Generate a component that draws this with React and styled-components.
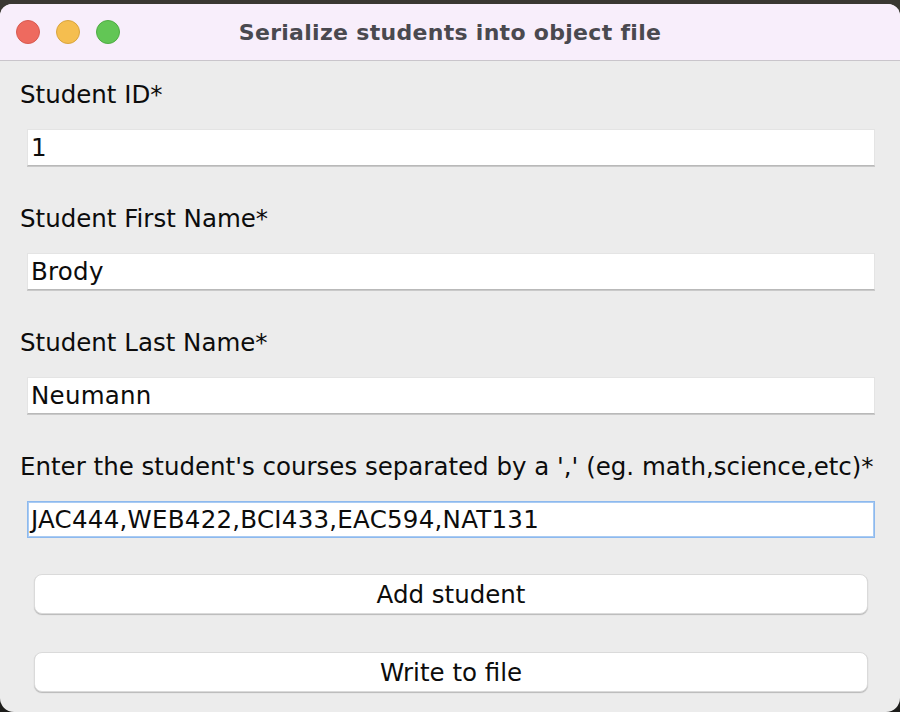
import React from 'react';
import styled, { createGlobalStyle } from 'styled-components';

const GlobalStyle = createGlobalStyle`
html, body {
  margin: 0;
  padding: 0;
  background: #1c1c1a;
}
body {
  width: 900px;
  height: 712px;
  overflow: hidden;
  font-family: 'DejaVu Sans', 'Liberation Sans', sans-serif;
}
`

const Desktop = styled.div`
height: 712px;
padding-top: 4px;
box-sizing: border-box;
background: linear-gradient(180deg, #3a3832 0%, #1d1d1b 100%);
`

const Window = styled.div`
height: 100%;
background: #ececec;
border-radius: 12px 12px 14px 14px;
overflow: hidden;
display: flex;
flex-direction: column;
`

const TitleBar = styled.div`
height: 56px;
flex: none;
background: #f8eefb;
border-bottom: 1px solid #c9c5cb;
display: grid;
grid-template-columns: 1fr auto 1fr;
align-items: center;
`

const Lights = styled.div`
display: flex;
gap: 16px;
padding-left: 16px;
`

const Light = styled.span`
width: 24px;
height: 24px;
border-radius: 50%;
box-sizing: border-box;
background: ${p => p.color};
border: 1px solid ${p => p.edge};
`

const Title = styled.div`
font-size: 22px;
font-weight: bold;
color: #4a494f;
letter-spacing: 0.3px;
`

const Form = styled.div`
display: flex;
flex-direction: column;
padding: 20px 25px 0 20px;
`

const Label = styled.div`
font-size: 24.5px;
line-height: 28px;
color: #0c0c0c;
margin-top: ${p => (p.first ? 0 : 39)}px;
white-space: nowrap;
`

const Input = styled.div`
margin: 20px 0 0 7px;
height: 37px;
box-sizing: border-box;
background: #fff;
font-size: 24.5px;
line-height: 28px;
letter-spacing: 0.25px;
color: #0c0c0c;
display: flex;
align-items: center;
padding-left: 3px;
border: 1px solid ${p => (p.focused ? '#8db9ee' : '#e4e4e4')};
border-bottom-color: ${p => (p.focused ? '#8db9ee' : '#b9b9b9')};
box-shadow: ${p => (p.focused ? 'inset 0 0 0 1px #a9cbf3' : '0 1px 0 #c9c9c9')};
`

const Button = styled.div`
margin: ${p => p.gap}px 7px 0 14px;
height: 40px;
box-sizing: border-box;
background: #fff;
border-radius: 8px;
border: 1px solid #dadada;
box-shadow: 0 1px 1px rgba(0, 0, 0, 0.22);
display: flex;
align-items: center;
justify-content: center;
font-size: 24.5px;
color: #0c0c0c;
`

const fields = [
  { label: 'Student ID*', value: '1' },
  { label: 'Student First Name*', value: 'Brody' },
  { label: 'Student Last Name*', value: 'Neumann' },
  {
    label: "Enter the student's courses separated by a ',' (eg. math,science,etc)*",
    value: 'JAC444,WEB422,BCI433,EAC594,NAT131',
    focused: true,
  },
];

export default function App() {
  return (
    <Desktop>
      <GlobalStyle />
      <Window>
        <TitleBar>
          <Lights>
            <Light color="#ee6a5f" edge="#d85a50" />
            <Light color="#f5be4f" edge="#d9a53e" />
            <Light color="#62c655" edge="#4fac44" />
          </Lights>
          <Title>Serialize students into object file</Title>
          <div />
        </TitleBar>
        <Form>
          {fields.map((f, i) => (
            <React.Fragment key={f.label}>
              <Label first={i === 0}>{f.label}</Label>
              <Input focused={f.focused}>{f.value}</Input>
            </React.Fragment>
          ))}
          <Button gap={36}>Add student</Button>
          <Button gap={38}>Write to file</Button>
        </Form>
      </Window>
    </Desktop>
  );
}
